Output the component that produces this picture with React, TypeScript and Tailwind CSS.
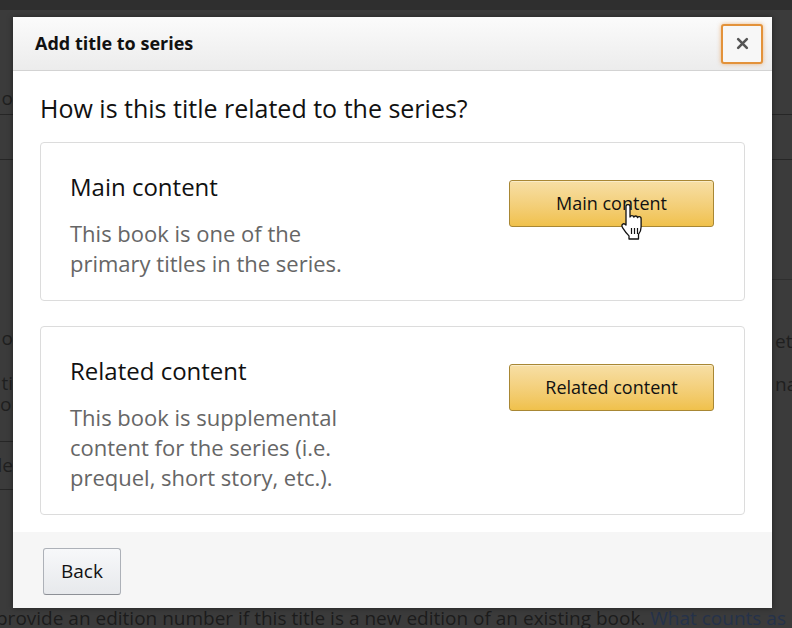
import React from "react";

const font = { fontFamily: '"Open Sans", "Noto Sans", Arial, sans-serif' };

function HandCursor() {
  return (
    <svg width="28" height="36" viewBox="0 0 28 36" className="absolute left-[110px] top-[24px]">
      <path
        d="M7 2.5c0-1.2 1-2 2-2s2 .8 2 2v10.5c.3-.9 1-1.4 1.9-1.4 1 0 1.8.7 1.9 1.6.3-.8 1-1.2 1.8-1.2 1 0 1.8.7 1.9 1.7.3-.6.9-1 1.6-1 1.1 0 2 .9 2 2v8.3c0 3.3-1.2 5.6-2.6 7.4V35H10v-3.1c-1.4-1.4-4.2-4.6-6.3-8C2.8 22.4 2.6 21 3.6 20.2c1-.8 2.3-.4 3.4.9V2.5z"
        fill="#fff"
        stroke="#111"
        strokeWidth="1.3"
        strokeLinejoin="round"
      />
      <path d="M12.5 24v6M15.5 24v6M18.5 24v6" stroke="#111" strokeWidth="1.2" />
    </svg>
  );
}

function Card({
  title,
  lines,
  button,
  cursor,
}: {
  title: string;
  lines: string[];
  button: string;
  cursor?: boolean;
}) {
  return (
    <div className="flex items-start justify-between rounded-[4px] border border-[#dcdcdc] bg-white pl-[29px] pr-[30px] pt-[28px] pb-[22px]">
      <div className="flex flex-col">
        <div className="text-[24px] leading-[32px] text-[#111]">{title}</div>
        <div className="mt-[15px] text-[22px] leading-[30px] text-[#666]">
          {lines.map((l) => (
            <div key={l} className="whitespace-nowrap">{l}</div>
          ))}
        </div>
      </div>
      <div className="relative mt-[9px]">
        <button className="flex h-[47px] w-[205px] items-center justify-center rounded-[3px] border border-[#a88734] bg-gradient-to-b from-[#f7dfa5] to-[#f0c14b] text-[18px] text-[#111] shadow-[inset_0_1px_0_rgba(255,255,255,0.4)]">
          {button}
        </button>
        {cursor && <HandCursor />}
      </div>
    </div>
  );
}

export default function App() {
  return (
    <div className="relative h-[628px] w-[792px] overflow-hidden bg-[#3b3b3b]" style={font}>
      {/* background page */}
      <div className="flex h-full flex-col">
        <div className="h-[10px] bg-[#2f2f2f]" />
        <div className="flex flex-1 justify-between">
          <div className="flex w-[13px] flex-col overflow-hidden text-[19px] text-[#1f1f1f]">
            <div className="flex h-[105px] items-end justify-end border-b border-[#262626] pb-[6px]">
              <span className="leading-none">o</span>
            </div>
            <div className="h-[45px] border-b border-[#262626]" />
            <div className="h-[282px] border-b border-[#262626] pt-[168px] leading-[21px]">
              <div className="whitespace-nowrap text-right">o</div>
              <div className="mt-[24px] whitespace-nowrap text-right">ti</div>
              <div className="whitespace-nowrap text-right">or</div>
            </div>
            <div className="flex h-[48px] items-center justify-end border-b border-[#262626]">
              <span>le</span>
            </div>
          </div>
          <div className="flex w-[20px] flex-col overflow-hidden text-[19px] text-[#1f1f1f]">
            <div className="h-[105px] border-b border-[#262626]" />
            <div className="h-[45px] border-b border-[#262626]" />
            <div className="h-[120px] border-b border-[#2f2f2f]" />
            <div className="pl-[3px] pt-[50px] leading-[22px]">
              <div className="whitespace-nowrap">et</div>
              <div className="mt-[21px] whitespace-nowrap">na</div>
            </div>
          </div>
        </div>
        <div className="-ml-[4px] h-[20px] whitespace-nowrap text-[19px] leading-[20px] text-[#1c1c1c]">
          provide an edition number if this title is a new edition of an existing book.{" "}
          <span className="text-[#25324a]">What counts as</span>
        </div>
      </div>

      {/* modal */}
      <div className="absolute left-[13px] top-[17px] flex h-[591px] w-[759px] flex-col bg-white shadow-[0_0_6px_rgba(0,0,0,0.4)]">
        <div className="flex h-[54px] items-center justify-between border-b border-[#d3d3d3] bg-gradient-to-b from-[#fbfbfb] to-[#ececec] pl-[22px] pr-[9px]">
          <div className="text-[18px] font-bold text-[#111]">Add title to series</div>
          <button className="flex h-[40px] w-[42px] items-center justify-center rounded-[3px] border-2 border-[#e3923a] bg-[#f7f7f7] shadow-[0_0_4px_rgba(228,121,17,0.5)]">
            <svg width="13" height="13" viewBox="0 0 12 12">
              <path d="M2 2L10 10M10 2L2 10" stroke="#555" strokeWidth="2.4" strokeLinecap="round" />
            </svg>
          </button>
        </div>
        <div className="flex flex-1 flex-col px-[27px] pt-[20px]">
          <div className="text-[25px] leading-[34px] text-[#111]">How is this title related to the series?</div>
          <div className="mt-[17px] flex flex-col gap-[25px]">
            <Card
              title="Main content"
              lines={["This book is one of the", "primary titles in the series."]}
              button="Main content"
              cursor
            />
            <Card
              title="Related content"
              lines={["This book is supplemental", "content for the series (i.e.", "prequel, short story, etc.)."]}
              button="Related content"
            />
          </div>
        </div>
        <div className="flex h-[76px] items-start bg-[#f6f6f6] pl-[30px] pt-[16px]">
          <button className="flex h-[47px] w-[78px] items-center justify-center rounded-[3px] border border-[#adb1b8] border-b-[#8d9096] bg-gradient-to-b from-[#f7f8fa] to-[#e7e9ec] text-[19px] text-[#111]">
            Back
          </button>
        </div>
      </div>
    </div>
  );
}
